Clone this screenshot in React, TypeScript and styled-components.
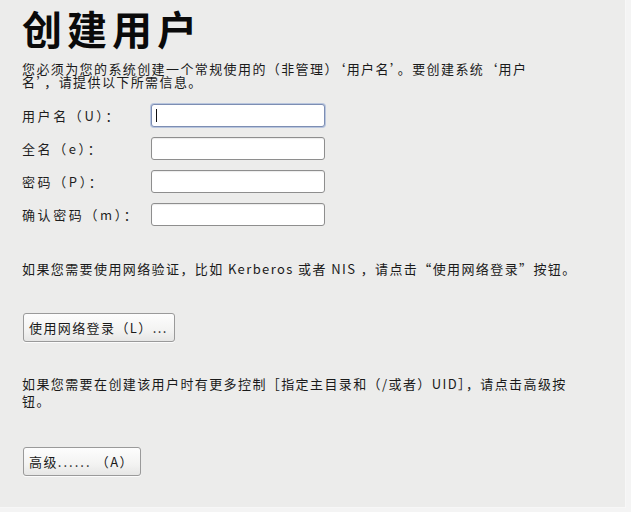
import React from "react";
import styled, { createGlobalStyle } from "styled-components";

const GlobalStyle = createGlobalStyle`
  html, body {
    margin: 0;
    padding: 0;
    background: #f4f4f4;
  }
  body {
    font-family: "DejaVu Sans", "Noto Sans CJK SC", sans-serif;
    color: #1a1a1a;
  }
`;

const Page = styled.div`
  box-sizing: border-box;
  width: 626px;
  height: 508px;
  background: #ececeb;
  border-right: 1px solid #f7f7f7;
  border-bottom: 1px solid #f7f7f7;
  padding: 0 0 0 22px;
  display: flex;
  flex-direction: column;
  align-items: flex-start;
`;

const Title = styled.h1`
  margin: 0;
  font-family: "Noto Sans CJK SC", sans-serif;
  font-size: 40px;
  font-weight: 700;
  line-height: 56px;
  letter-spacing: 5px;
  color: #0a0a0a;
`;

const Text = styled.p<{ $top: number; $width?: number; $lh?: number }>`
  margin: ${(p) => p.$top}px 0 0;
  width: ${(p) => (p.$width ? `${p.$width}px` : "auto")};
  font-family: "Noto Sans CJK SC", "DejaVu Sans", sans-serif;
  font-size: 13px;
  line-height: ${(p) => p.$lh ?? 14}px;
  letter-spacing: 1.4px;
`;

const Form = styled.div`
  margin-top: 16px;
  display: grid;
  grid-template-columns: 129px 174px;
  grid-auto-rows: 23px;
  row-gap: 10px;
  align-items: center;
`;

const Label = styled.label`
  font-family: "Noto Sans CJK SC", "DejaVu Sans", sans-serif;
  font-size: 13px;
  letter-spacing: 2.6px;
  color: #1e1e1e;
`;

const Field = styled.div<{ $focused?: boolean }>`
  box-sizing: border-box;
  height: 23px;
  border: 1px solid ${(p) => (p.$focused ? "#7d8eb3" : "#8e8e8e")};
  border-radius: 3px;
  background: #ffffff;
  box-shadow: ${(p) =>
    p.$focused ? "0 0 0 1px #b9c6de" : "inset 0 1px 1px rgba(0,0,0,0.08)"};
  display: flex;
  align-items: center;
  padding-left: 4px;
`;

const Caret = styled.span`
  width: 1px;
  height: 13px;
  background: #111;
`;

const Button = styled.button<{ $top: number }>`
  margin-top: ${(p) => p.$top}px;
  margin-left: 1px;
  box-sizing: border-box;
  height: 29px;
  padding: 0 6px 0 5px;
  border: 1px solid #9a9a9a;
  border-radius: 3px;
  background: linear-gradient(#fdfdfd, #f3f3f2 60%, #e6e6e5);
  box-shadow: 0 1px 0 rgba(255, 255, 255, 0.8);
  font-family: "Noto Sans CJK SC", "DejaVu Sans", sans-serif;
  font-size: 13px;
  letter-spacing: 1.4px;
  color: #1a1a1a;
  white-space: nowrap;
`;

const Dots = styled.span`
  letter-spacing: 2px;
`;

const rows = [
  { label: "用户名（U）：", focused: true },
  { label: "全名（e）：" },
  { label: "密码（P）：" },
  { label: "确认密码（m）：" },
];

export default function App() {
  return (
    <>
      <GlobalStyle />
      <Page>
        <Title>创建用户</Title>
        <Text $top={6} $width={530} $lh={13}>
          您必须为您的系统创建一个常规使用的（非管理）‘用户名’。要创建系统‘用户名’，请提供以下所需信息。
        </Text>
        <Form>
          {rows.map((r) => (
            <React.Fragment key={r.label}>
              <Label>{r.label}</Label>
              <Field $focused={r.focused}>{r.focused && <Caret />}</Field>
            </React.Fragment>
          ))}
        </Form>
        <Text $top={36}>
          如果您需要使用网络验证，比如 Kerberos 或者 NIS ，请点击“使用网络登录”按钮。
        </Text>
        <Button $top={37}>使用网络登录（L）...</Button>
        <Text $top={33} $width={556} $lh={17}>
          如果您需要在创建该用户时有更多控制［指定主目录和（/或者）UID］，请点击高级按钮。
        </Text>
        <Button $top={38}>
          高级<Dots>......</Dots> （A）
        </Button>
      </Page>
    </>
  );
}
